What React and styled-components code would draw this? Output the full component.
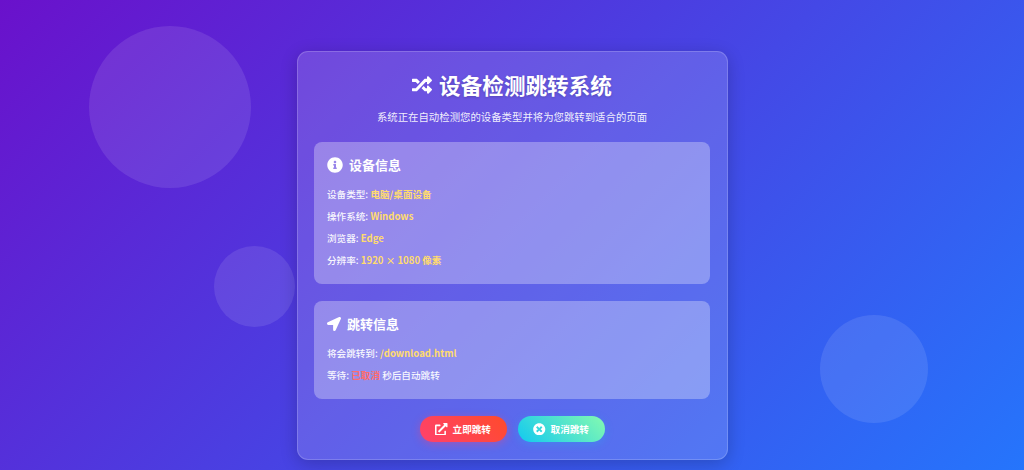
import React from 'react';
import styled, { createGlobalStyle } from 'styled-components';
import { FaRandom, FaInfoCircle, FaLocationArrow, FaExternalLinkAlt, FaTimesCircle } from 'react-icons/fa';

const GlobalStyle = createGlobalStyle`
  * { box-sizing: border-box; }
  html, body { margin: 0; padding: 0; height: 100%; overflow: hidden; }
  body {
    font-family: "Noto Sans CJK SC", "Noto Sans", sans-serif;
    color: #fff;
  }
`;

const Page = styled.div`
  position: relative;
  height: 470px;
  overflow: hidden;
  padding-top: 51px;
  display: flex;
  justify-content: center;
  align-items: flex-start;
  background: linear-gradient(135deg, #6a11cb 0%, #2575fc 100%);
`;

const Bubble = styled.div`
  position: absolute;
  left: ${p => p.$x - p.$r}px;
  top: ${p => p.$y - p.$r}px;
  width: ${p => p.$r * 2}px;
  height: ${p => p.$r * 2}px;
  border-radius: 50%;
  background: rgba(255, 255, 255, 0.1);
`;

const Card = styled.main`
  position: relative;
  width: 431px;
  height: 409px;
  padding: 15px 17px 0 16px;
  border-radius: 11px;
  border: 1px solid rgba(255, 255, 255, 0.18);
  background: rgba(255, 255, 255, 0.15);
  box-shadow: 0 4px 17px rgba(0, 0, 0, 0.2);
`;

const Title = styled.h1`
  margin: 0;
  height: 36px;
  padding-left: 1px;
  display: flex;
  align-items: center;
  justify-content: center;
  gap: 7px;
  font-size: 21.6px;
  font-weight: 700;
  line-height: 36px;
  text-shadow: 0 1px 3px rgba(0, 0, 0, 0.2);
  svg { font-size: 20px; }
`;

const Subtitle = styled.p`
  margin: 6px 0 0;
  height: 16px;
  padding-left: 1px;
  font-size: 10.4px;
  line-height: 16px;
  text-align: center;
  color: rgba(255, 255, 255, 0.92);
`;

const Panel = styled.section`
  height: ${p => p.$h}px;
  margin-top: ${p => p.$top}px;
  padding: 13px 13px 0 13.5px;
  border-radius: 8px;
  background: rgba(255, 255, 255, 0.3);
`;

const PanelTitle = styled.h2`
  margin: 0 0 8px;
  height: 20px;
  display: flex;
  align-items: center;
  gap: 6px;
  font-size: 13px;
  font-weight: 700;
  line-height: 20px;
  svg { font-size: ${p => p.$icon}px; }
`;

const Line = styled.p`
  margin: 0;
  height: 22px;
  font-size: 9.6px;
  line-height: 22px;
  font-weight: 500;
  color: rgba(255, 255, 255, 0.95);
`;

const Value = styled.span`
  font-weight: 700;
  color: ${p => (p.$alert ? '#ff6b6b' : '#ffdb6e')};
`;

const Actions = styled.div`
  display: flex;
  justify-content: center;
  gap: 11px;
  margin-top: 17px;
  padding-left: 1px;
`;

const Button = styled.button`
  width: 87px;
  height: 26px;
  padding: 0;
  border: 0;
  border-radius: 13px;
  display: flex;
  align-items: center;
  justify-content: center;
  gap: 5px;
  font-family: inherit;
  font-size: 9.6px;
  font-weight: 700;
  color: #fff;
  background: ${p => p.$cancel
    ? 'linear-gradient(45deg, #12c9f0, #84fab0)'
    : 'linear-gradient(45deg, #ff416c, #ff4b2b)'};
  box-shadow: ${p => p.$cancel
    ? '0 2px 8px rgba(18, 201, 240, 0.25)'
    : '0 2px 8px rgba(255, 65, 108, 0.4)'};
  svg { font-size: 12.5px; }
`;

export default function App() {
  return (
    <Page>
      <GlobalStyle />
      <Bubble $x={170} $y={107} $r={81} />
      <Bubble $x={254} $y={286} $r={40.5} />
      <Bubble $x={874} $y={369} $r={54} />
      <Card>
        <Title><FaRandom /> 设备检测跳转系统</Title>
        <Subtitle>系统正在自动检测您的设备类型并将为您跳转到适合的页面</Subtitle>

        <Panel $h={142} $top={17}>
          <PanelTitle $icon={16}><FaInfoCircle /> 设备信息</PanelTitle>
          <Line>设备类型: <Value>电脑/桌面设备</Value></Line>
          <Line>操作系统: <Value>Windows</Value></Line>
          <Line>浏览器: <Value>Edge</Value></Line>
          <Line>分辨率: <Value>1920 × 1080 像素</Value></Line>
        </Panel>

        <Panel $h={98} $top={17}>
          <PanelTitle $icon={14}><FaLocationArrow /> 跳转信息</PanelTitle>
          <Line>将会跳转到: <Value>/download.html</Value></Line>
          <Line>等待: <Value $alert>已取消</Value> 秒后自动跳转</Line>
        </Panel>

        <Actions>
          <Button><FaExternalLinkAlt /> 立即跳转</Button>
          <Button $cancel><FaTimesCircle /> 取消跳转</Button>
        </Actions>
      </Card>
    </Page>
  );
}
